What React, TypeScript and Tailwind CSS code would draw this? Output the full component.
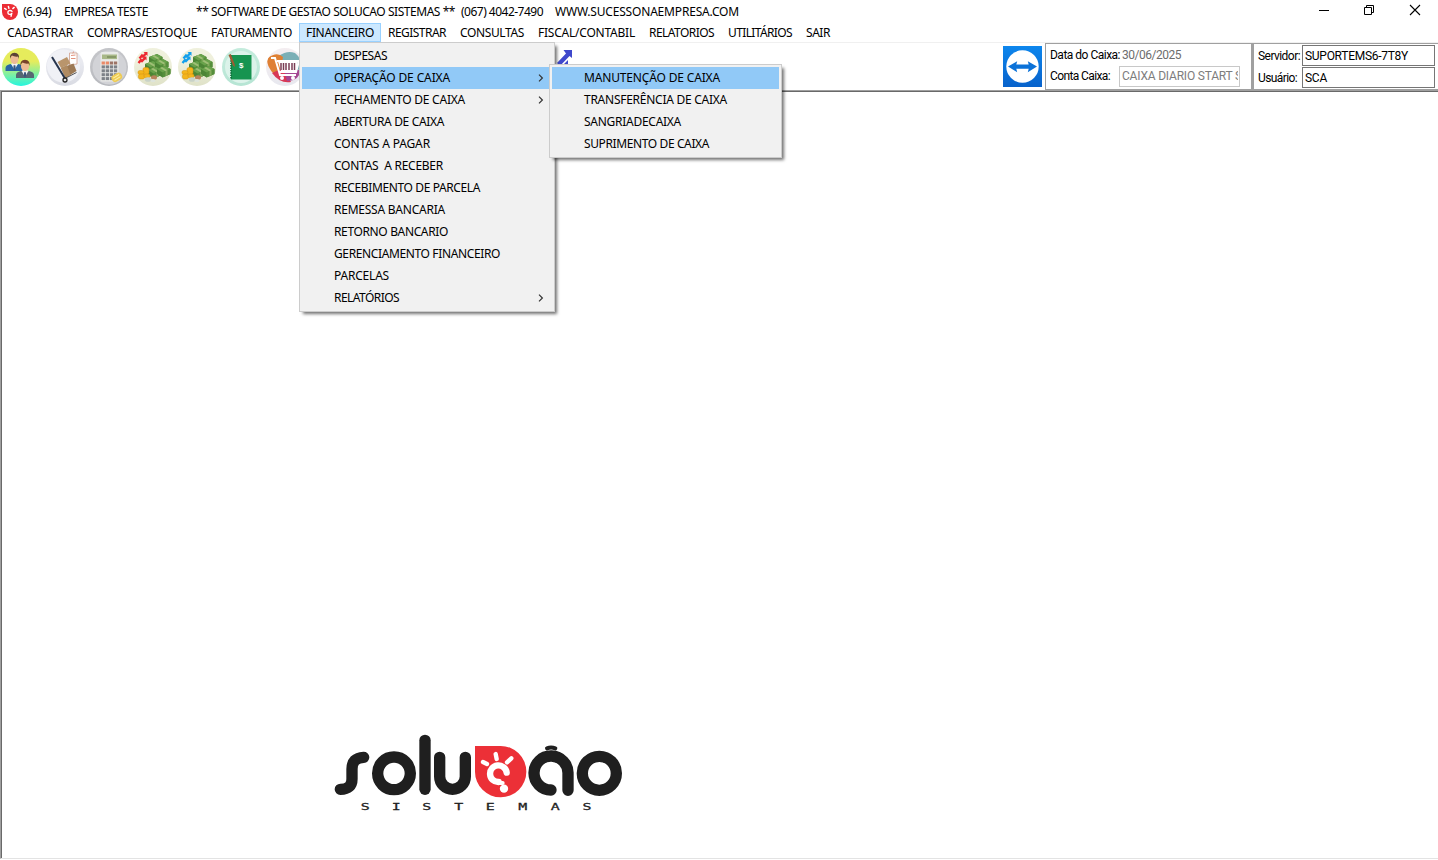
import React, { useLayoutEffect, useRef } from "react";

/** Single-line label whose letter spacing is tuned so the text fills `w` pixels. */
function Fit({ w, children, className = "" }: { w: number; children: string; className?: string }) {
  const ref = useRef<HTMLSpanElement>(null);
  useLayoutEffect(() => {
    const el = ref.current;
    if (!el) return;
    el.style.letterSpacing = "0px";
    const natural = el.getBoundingClientRect().width;
    el.style.letterSpacing = `${(w - natural) / children.length}px`;
  }, [w, children]);
  return (
    <span ref={ref} className={`inline-block whitespace-pre ${className}`}>
      {children}
    </span>
  );
}

type Entry = { label: string; w: number; sub?: boolean; active?: boolean };

const MENU_BAR: Entry[] = [
  { label: "CADASTRAR", w: 66 },
  { label: "COMPRAS/ESTOQUE", w: 110 },
  { label: "FATURAMENTO", w: 81 },
  { label: "FINANCEIRO", w: 68, active: true },
  { label: "REGISTRAR", w: 58 },
  { label: "CONSULTAS", w: 64 },
  { label: "FISCAL/CONTABIL", w: 97 },
  { label: "RELATORIOS", w: 65 },
  { label: "UTILITÁRIOS", w: 64 },
  { label: "SAIR", w: 24 },
];

const FINANCEIRO: Entry[] = [
  { label: "DESPESAS", w: 53 },
  { label: "OPERAÇÃO DE CAIXA", w: 116, sub: true, active: true },
  { label: "FECHAMENTO DE CAIXA", w: 131, sub: true },
  { label: "ABERTURA DE CAIXA", w: 110 },
  { label: "CONTAS A PAGAR", w: 96 },
  { label: "CONTAS  A RECEBER", w: 109 },
  { label: "RECEBIMENTO DE PARCELA", w: 146 },
  { label: "REMESSA BANCARIA", w: 111 },
  { label: "RETORNO BANCARIO", w: 114 },
  { label: "GERENCIAMENTO FINANCEIRO", w: 166 },
  { label: "PARCELAS", w: 55 },
  { label: "RELATÓRIOS", w: 65, sub: true },
];

const CAIXA: Entry[] = [
  { label: "MANUTENÇÃO DE CAIXA", w: 136, active: true },
  { label: "TRANSFERÊNCIA DE CAIXA", w: 143 },
  { label: "SANGRIADECAIXA", w: 97 },
  { label: "SUPRIMENTO DE CAIXA", w: 125 },
];

function Drop({ items, className }: { items: Entry[]; className: string }) {
  return (
    <div
      className={`absolute border border-[#cccccc] bg-[#f1f1f1] p-[2px] shadow-[3px_3px_3px_-1px_rgba(0,0,0,0.55)] ${className}`}
    >
      {items.map((it) => (
        <div
          key={it.label}
          className={`flex h-[22px] items-center justify-between pr-2 pl-8 ${it.active ? "bg-[#91c9f7]" : ""}`}
        >
          <Fit w={it.w}>{it.label}</Fit>
          {it.sub && (
            <svg width="6" height="8" viewBox="0 0 6 8" fill="none" stroke="#333" strokeWidth="1.2">
              <path d="M1 0.6L4.4 4L1 7.4" />
            </svg>
          )}
        </div>
      ))}
    </div>
  );
}

function AppIcon() {
  return (
    <svg width="16" height="16" viewBox="0 0 16 16" fill="none">
      <path d="M0 0H8A8 8 0 1 1 0 8Z" fill="#ec2d35" />
      <g stroke="#fff" strokeWidth="1.4" strokeLinecap="round">
        <path d="M2.6 4.4L4.2 5.4M6.4 2.5L6.9 4.3M10.8 4.6L12.2 3.4" />
        <path d="M10 7.4C8.4 5.6 5.6 6.7 5.9 8.8C6.2 10.6 8.8 11 9.8 9.4M9.8 9.4L9 12.2" />
      </g>
    </svg>
  );
}

function Round({ id, from, to, children }: { id: string; from: string; to: string; children: React.ReactNode }) {
  return (
    <svg width="40" height="40" viewBox="0 0 40 40" className="shrink-0">
      <defs>
        <linearGradient id={id} x1="0" y1="0" x2="0" y2="1">
          <stop offset="0.35" stopColor={from} />
          <stop offset="1" stopColor={to} />
        </linearGradient>
        <clipPath id={`${id}-c`}>
          <circle cx="20" cy="20" r="19" />
        </clipPath>
      </defs>
      <circle cx="20" cy="20" r="19" fill={`url(#${id})`} />
      <g clipPath={`url(#${id}-c)`}>{children}</g>
    </svg>
  );
}

function Person({ x, y, hair, suit }: { x: number; y: number; hair: string; suit: string }) {
  return (
    <g transform={`translate(${x} ${y})`}>
      <path d="M-9 17V14Q-9 11-4 10L0 12L4 10Q9 11 9 14V17Z" fill={suit} />
      <path d="M-3.4 10L0 16L3.4 10L0 8Z" fill="#f2f5f8" />
      <path d="M-.9 11.2H.9L1.2 15L0 17L-1.2 15Z" fill="#39547b" />
      <ellipse cx="0" cy="5.4" rx="4" ry="4.8" fill="#edbb96" />
      <path d="M-4.5 5Q-5.300-1 0-1.200Q5.300-1 4.500 5L3.600 2.500Q0 3-2.500 1.600Q-4 3-4.500 5Z" fill={hair} />
    </g>
  );
}

function Bundle({ x, y }: { x: number; y: number }) {
  return (
    <g transform={`translate(${x} ${y})`}>
      <path d="M0 3L8 0L13.500 3V8L5.500 11.500L0 8Z" fill="#4b8535" />
      <path d="M0 3L8 0L13.500 3L5.500 6.500Z" fill="#69a24b" />
      <path d="M5.500 6.500L13.500 3V8L5.500 11.500Z" fill="#568f3c" />
      <path d="M3 1.900L5 1.100L10.500 4.300L8.500 5.200Z" fill="#9fbf76" />
      <path d="M8.500 5.200L10.500 4.300V9.300L8.500 10.200Z" fill="#85ab5d" />
    </g>
  );
}

function Money({ id, color }: { id: string; color: string }) {
  return (
    <Round id={id} from="#eff0dc" to="#dfe2c8">
      <Bundle x={16} y={7} />
      <Bundle x={12} y={14} />
      <Bundle x={22} y={12} />
      <Bundle x={15} y={20} />
      <Bundle x={24} y={19} />
      <g stroke={color} strokeWidth="2.400" fill={color}>
        <path d="M6.500 11.500L9 8.500L10 9.500L13 6.500" fill="none" />
        <path d="M10.500 5H14.500V9Z" stroke="none" />
        <path d="M5.500 16L8 13L9 14L12 11" fill="none" />
        <path d="M9.500 9.500H13.500V13.500Z" stroke="none" />
      </g>
      <g fill="#f4b51c" stroke="#d7920d" strokeWidth=".5">
        <rect x="10" y="20.5" width="6" height="7" rx="1.8" />
        <rect x="5" y="23.5" width="6" height="4" rx="1.8" />
        <rect x="5.5" y="27" width="6" height="5" rx="1.8" />
        <rect x="11" y="27" width="6" height="4" rx="1.8" />
      </g>
      <ellipse cx="15" cy="32.5" rx="3.2" ry="2.3" fill="#c8d2c8" />
      <ellipse cx="21" cy="30.5" rx="3" ry="2.2" fill="#b9825b" />
      <ellipse cx="20" cy="33.6" rx="2.4" ry="1.6" fill="#dde4dc" />
    </Round>
  );
}

function Toolbar() {
  return (
    <div className="flex gap-1 pt-1 pl-px">
      <Round id="people" from="#e6ec5c" to="#24f5df">
        <Person x={13.5} y={7} hair="#5b4136" suit="#2965a3" />
        <Person x={24} y={14} hair="#77422c" suit="#566772" />
      </Round>
      <Round id="cart" from="#e9eaf0" to="#d9dbe3">
        <circle cx="18.5" cy="19" r="16.5" fill="#f0f1f6" />
        <path d="M24.5 6H32V17L24.5 18Z" fill="#fff" stroke="#cf9e8b" strokeWidth=".8" />
        <path d="M26 8.5L30.5 8M26 11.5H30.5M27.5 6L29 4.6" stroke="#da765a" strokeWidth=".8" />
        <path d="M12.5 15L22 10L25.5 16.5L16 21Z" fill="#b9956c" />
        <path d="M16 21L28.5 16.5L31.5 24L20.5 31Z" fill="#9d7a55" />
        <path d="M16 21L22 18L25.4 28L20.5 31Z" fill="#b08b62" />
        <path d="M7 10L20 31.5" stroke="#27354d" strokeWidth="2" />
        <path d="M19 32L31.5 25.5" stroke="#555" strokeWidth="1" />
        <circle cx="20" cy="33" r="2" fill="#e5e5e5" stroke="#222" strokeWidth="1.3" />
      </Round>
      <Round id="calc" from="#c3c4c8" to="#b6b8bd">
        <circle cx="20.5" cy="20.5" r="17" fill="#d2d3d7" />
        <rect x="11.5" y="5" width="18" height="29.500" rx="1.500" fill="#e9eae8" />
        <rect x="13" y="7.500" width="15" height="4.600" fill="#a8b887" />
        <path d="M18 10H27" stroke="#7d8f5f" strokeWidth="1.5" />
        {[0, 1, 2, 3, 4].map((r) =>
          [0, 1, 2, 3].map((c) => (
            <rect
              key={`${r}-${c}`}
              x={12.6 + c * 4.1}
              y={14.5 + r * 3.9}
              width="3.3"
              height="3"
              fill={r === 0 ? (c < 2 ? "#ea8a68" : "#9d7466") : "#7d8187"}
            />
          )),
        )}
        <g transform="rotate(-32 27 30)">
          <rect x="22" y="27" width="11" height="7.500" rx="3.5" fill="#edcb55" />
          <path d="M24 29.5H31M24 32H31" stroke="#fff0a0" strokeWidth="1" />
        </g>
      </Round>
      <Money id="out" color="#ed2830" />
      <Money id="in" color="#139fec" />
      <Round id="book" from="#c3ebdc" to="#b5e4d3">
        <circle cx="20" cy="20" r="16" fill="#dcf3ea" />
        <rect x="10" y="8" width="20.500" height="24.500" fill="#169450" />
        <path d="M10 8.5V32.5" stroke="#0c6c37" strokeWidth="1.6" strokeDasharray="1.4 1" />
        <path d="M7.5 8L12 18.500L14 20L13.6 17L9.8 7Z" fill="#9e5a32" />
        <text x="20.3" y="21.2" textAnchor="middle" fontSize="8" fontWeight="bold" fill="#fff" fontFamily="Liberation Sans, sans-serif">
          $
        </text>
      </Round>
      <Round id="shop" from="#f3edf0" to="#e7e8ef">
        <path d="M14 9Q22 3 30 6Q37 11 36 22L20 27Z" fill="#7bafb6" />
        <path d="M3 11Q12 4 18 10L15 29Q8 28 5 22Q1 16 3 11Z" fill="#df8034" />
        <path d="M7 26L18 21L26 35Q15 37 7 26Z" fill="#d83855" />
        <path d="M19 23H36Q33 35 22 34Z" fill="#a54892" />
        <path d="M6 11H10L15 28H31M12 14H34L31 25H14" stroke="#fff" strokeWidth="2" fill="none" />
        <path d="M13 14.500H33L31 24.500H16Z" fill="#fff" />
        <path d="M16 16V23M18.500 16V23M21 16V23M24 16V23M27 16V23M29.500 16V23" stroke="#7a3d54" strokeWidth="1.500" />
        <circle cx="17" cy="31" r="2" fill="#fff" />
        <circle cx="28" cy="31" r="2" fill="#fff" />
      </Round>
    </div>
  );
}

function Logo() {
  return (
    <svg width="320" height="95" viewBox="0 0 960 285" fill="none">
      <g stroke="#1f1f1f" strokeWidth="34" strokeLinecap="round">
        <path d="M61 193C85 193 96 182 96 162V132C96 110 107 98 131 97" />
        <circle cx="222" cy="145" r="49" />
        <path d="M315 46V193" />
        <path d="M359 97V154.500a38.500 38.500 0 0 0 77 0V97" />
        <path d="M693 195A51 51 0 1 1 744 146V196" />
        <circle cx="838" cy="145" r="51" />
      </g>
      <path d="M681 70Q693 65 706 70" stroke="#1f1f1f" strokeWidth="12" strokeLinecap="round" />
      <path d="M465 63H541A77 77 0 1 1 465 140Z" fill="#ec3037" />
      <g stroke="#fff" strokeLinecap="round">
        <path d="M489 111L501 117M527 87L530 102M561 112L574 100" strokeWidth="13" />
        <path d="M560 143A25 25 0 1 0 536 171" strokeWidth="19" />
        <path d="M536 174L548 174" strokeWidth="12" />
      </g>
      <circle cx="552" cy="191" r="12.500" fill="#fff" />
      <g
        fontFamily="DejaVu Sans Mono, monospace"
        fontSize="28"
        fill="#1f1f1f"
        stroke="#1f1f1f"
        strokeWidth="0.800"
        textAnchor="middle"
      >
        {[136, 229, 320, 416, 511, 608, 706, 801].map((x, i) => (
          <text key={x} transform={`translate(${x} 255) scale(1.600 1)`}>
            {"SISTEMAS"[i]}
          </text>
        ))}
      </g>
    </svg>
  );
}

function StatusPanels() {
  return (
    <div className="ml-auto flex font-['Roboto','Liberation_Sans',sans-serif] text-[12px] leading-[14px]">
      <svg width="39" height="41" viewBox="0 0 39 41" className="mt-[3px] mr-[3px]">
        <defs>
          <linearGradient id="tv" x1="0" y1="0" x2="0" y2="1">
            <stop stopColor="#0d86ed" />
            <stop offset="1" stopColor="#0862cb" />
          </linearGradient>
        </defs>
        <rect width="39" height="41" fill="url(#tv)" />
        <circle cx="19.5" cy="20.5" r="16.2" fill="#fff" />
        <path d="M5 20.500L14.200 15.200L13.300 18.600H25.700L24.800 15.200L34 20.500L24.800 26.200L25.700 22.700H13.300L14.200 26.200Z" fill="#0b72d8" />
      </svg>
      <div className="flex w-[207px] flex-col border-t border-r border-b border-l border-[#a0a0a0] pl-1">
        <div className="flex h-[21px] items-center">
          <Fit w={70}>Data do Caixa:</Fit>
          <Fit w={59} className="ml-0.5 text-[#6d6d6d]">30/06/2025</Fit>
        </div>
        <div className="flex h-[22px] items-center">
          <div className="w-[69px]">
            <Fit w={60}>Conta Caixa:</Fit>
          </div>
          <div className="flex h-[21px] w-[121px] items-center border border-[#c8c8c8] pl-0.5 text-[#7d7d7d]">
            <div className="w-[116px] overflow-hidden">
              <Fit w={120}>CAIXA DIARIO START S</Fit>
            </div>
          </div>
        </div>
      </div>
      <div className="flex w-[186px] flex-col gap-px border-t border-b border-l-2 border-[#a0a0a0] pt-px pl-1">
        <div className="flex items-center">
          <div className="w-11">
            <Fit w={42}>Servidor:</Fit>
          </div>
          <div className="flex h-[21px] w-[133px] items-center border border-[#767676] pl-0.5">
            <Fit w={103}>SUPORTEMS6-7T8Y</Fit>
          </div>
        </div>
        <div className="flex items-center">
          <div className="w-11">
            <Fit w={39}>Usuário:</Fit>
          </div>
          <div className="flex h-[21px] w-[133px] items-center border border-[#767676] pl-0.5">
            <Fit w={22}>SCA</Fit>
          </div>
        </div>
      </div>
    </div>
  );
}

export default function App() {
  return (
    <div className="relative flex h-[860px] w-[1438px] flex-col overflow-hidden bg-white font-['Noto_Sans','Open_Sans',sans-serif] text-[12px] leading-[16px] text-black">
      <header className="flex h-[23px] items-center pl-0.5">
        <AppIcon />
        <div className="flex pl-[5px]">
          <Fit w={28}>(6.94)</Fit>
          <Fit w={84} className="ml-[13px]">EMPRESA TESTE</Fit>
          <Fit w={259} className="ml-12">** SOFTWARE DE GESTAO SOLUCAO SISTEMAS **</Fit>
          <Fit w={82} className="ml-1.5">(067) 4042-7490</Fit>
          <Fit w={184} className="ml-3">WWW.SUCESSONAEMPRESA.COM</Fit>
        </div>
        <svg width="102" height="12" viewBox="0 0 102 12" className="mr-[17px] mb-[3px] ml-auto" fill="none" stroke="#000">
          <path d="M0 6.500H10" />
          <path d="M45.500 3.500H52.500V10.500H45.500ZM47.500 3.500V1.500H54.500V8.500H52.500" />
          <path d="M91 1L101 11M101 1L91 11" strokeWidth="1.100" />
        </svg>
      </header>
      <nav className="flex h-[19px]">
        {MENU_BAR.map((m) => (
          <div
            key={m.label}
            className={
              m.active
                ? "flex items-center border border-[#99d1ff] bg-[#cce8ff] px-1.5"
                : "flex items-center px-[7px]"
            }
          >
            <Fit w={m.w}>{m.label}</Fit>
          </div>
        ))}
      </nav>
      <div className="h-px bg-[#f0f0f0]" />
      <div className="flex h-[47px] shrink-0">
        <Toolbar />
        <svg width="20" height="20" viewBox="0 0 20 20" className="mt-1.5 ml-[247px]" fill="#3f48cc">
          <path d="M20 1V9L17.500 7L8 17L5 14L14 4.500L11.500 1Z" />
          <path d="M16 11V18H9L12 15Z" />
        </svg>
        <StatusPanels />
      </div>
      <main className="h-[769px] border-t border-b border-l border-t-[#a0a0a0] border-b-[#e3e3e3] border-l-[#a0a0a0]">
        <div className="h-full border-t border-l border-[#696969] pt-[633px] pl-[318px]">
          <Logo />
        </div>
      </main>
      <Drop items={FINANCEIRO} className="top-[42px] left-[299px] w-[256px]" />
      <Drop items={CAIXA} className="top-[64px] left-[549px] w-[233px]" />
    </div>
  );
}
